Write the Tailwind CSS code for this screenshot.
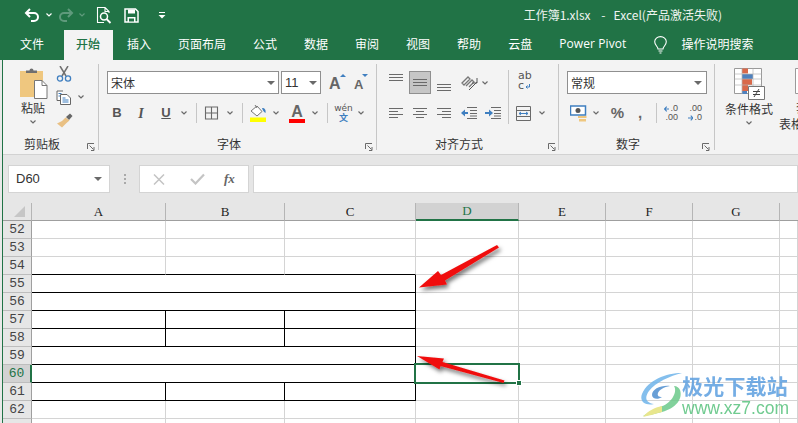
<!DOCTYPE html>
<html lang="zh-CN">
<head>
<meta charset="UTF-8">
<title>工作簿1.xlsx - Excel</title>
<script src="https://cdn.jsdelivr.net/npm/@tailwindcss/browser@4"></script>
</head>
<body class="bg-white">
<svg class="hidden">
  <symbol id="chev" viewBox="0 0 12 8"><path d="M3.5 2.5 6 5l2.500-2.500" fill="none" stroke="#6a6a6a" stroke-width="1.200"/></symbol>
  <symbol id="launch" viewBox="0 0 8 8"><path d="M.5 6V.5H7M2.500 2.500 6.500 6.500M7 4v3.500H4" fill="none" stroke="#6a6a6a" stroke-width="1"/></symbol>
  <symbol id="drop" viewBox="0 0 8 4"><path d="M0 0h8L4 4z" fill="#6a6a6a"/></symbol>
</svg>

<div class="relative w-[798px] h-[423px] overflow-hidden font-['Noto_Sans_CJK_SC','Noto_Sans',sans-serif] text-[12px] text-[#444]">
  <!-- Title bar -->
  <div class="h-[30px] bg-[#217346] flex items-center text-white">
    <svg class="ml-[24px] w-[16px] h-[14px]" viewBox="0 0 16 14"><path d="M6 1 2 5l4 4M2 5h8a4 4 0 0 1 0 8H7" fill="none" stroke="#fff" stroke-width="2"/></svg>
    <svg class="ml-[3px] w-[12px] h-[8px]" viewBox="0 0 12 8"><path d="M3.500 2.500 6 5l2.500-2.500" fill="none" stroke="#fff" stroke-width="1.200"/></svg>
    <svg class="ml-[3px] w-[16px] h-[14px]" viewBox="0 0 16 14"><path d="M10 1l4 4-4 4M14 5H6a4 4 0 0 0 0 8h3" fill="none" stroke="#5f9a7c" stroke-width="2"/></svg>
    <svg class="ml-[2px] w-[12px] h-[8px]" viewBox="0 0 12 8"><path d="M3.500 2.500 6 5l2.500-2.500" fill="none" stroke="#5f9a7c" stroke-width="1.200"/></svg>
    <svg class="ml-[8px] w-[16px] h-[17px]" viewBox="0 0 16 17"><path d="M9 .5H1.500v15H8M9 .5l4 4V6M9 .5v4h4" fill="none" stroke="#fff" stroke-width="1.100"/><circle cx="8" cy="9.500" r="3.500" fill="none" stroke="#fff" stroke-width="1.500"/><path d="M10.500 12l4 4" stroke="#fff" stroke-width="1.800"/></svg>
    <svg class="ml-[12px] w-[15px] h-[15px]" viewBox="0 0 15 15"><path d="M1 1h10.500L14 3.500V14H1z" fill="none" stroke="#fff" stroke-width="1.500"/><path d="M4 1.500h7v4H4zM3.500 9h8v5h-8z" fill="#fff"/><path d="M5 10.500h5v3H5z" fill="#217346"/></svg>
    <svg class="ml-[19px] w-[8px] h-[7px]" viewBox="0 0 8 7"><path d="M1 .5h6" stroke="#fff"/><path d="M.5 3h7L4 6.500z" fill="#fff"/></svg>
    <span class="ml-auto mr-[76px] whitespace-pre text-[#eef4f0]">工作簿1.xlsx    -   Excel(产品激活失败)</span>
  </div>

  <!-- Tabs -->
  <div class="h-[30px] bg-[#217346] flex pl-[7px] text-white leading-[28px]">
    <div class="px-[13px]">文件</div>
    <div class="ml-[7px] px-[12px] w-[49px] h-[30px] bg-[#f3f3f3] text-[#217346] font-medium">开始</div>
    <div class="ml-[1px] px-[13px]">插入</div>
    <div class="ml-[1px] px-[13px]">页面布局</div>
    <div class="ml-[1px] px-[13px]">公式</div>
    <div class="ml-[1px] px-[13px]">数据</div>
    <div class="ml-[1px] px-[13px]">审阅</div>
    <div class="ml-[1px] px-[13px]">视图</div>
    <div class="ml-[1px] px-[13px]">帮助</div>
    <div class="ml-[1px] px-[13px]">云盘</div>
    <div class="ml-[1px] px-[13px] whitespace-nowrap font-['Open_Sans',sans-serif] tracking-[.1px]">Power Pivot</div>
    <svg class="ml-[15px] mt-[6px] w-[13px] h-[18px]" viewBox="0 0 13 18"><path d="M4 13c0-2.500-3.300-3.800-3.300-7.200a5.800 5.200 0 0 1 11.600 0C12.300 9.200 9 10.500 9 13zM4.500 15h4M5.500 17h2" fill="none" stroke="#fff" stroke-width="1.100"/></svg>
    <div class="ml-[14px]">操作说明搜索</div>
  </div>

  <div class="flex h-[363px]">
    <!-- window edge -->
    <div class="w-[3px] bg-[#e9e9e9] border-r border-[#217346]"></div>

    <div class="w-[795px]">
      <!-- Ribbon -->
      <div class="h-[95px] bg-[#f3f3f3] border-b border-[#d2d2d2] flex items-start overflow-hidden">
        <!-- Clipboard -->
        <div class="relative w-[95px] h-[94px] shrink-0 flex">
          <div class="ml-[14px] w-[32px] flex flex-col items-center pt-[8px]">
            <svg class="w-[29px] h-[31px]" viewBox="0 0 29 31"><path d="M1 3h23v26H1z" fill="#efc77f"/><path d="M7 5V2.500h3.500a2 2 0 0 1 4 0H18V5z" fill="#6f6f6f"/><path d="M15.500 12.500h7.500l5 5v13H15.500z" fill="#fff" stroke="#777"/><path d="M23 12.500v5h5" fill="none" stroke="#777"/></svg>
            <div class="leading-[18px] text-[#333]">粘贴</div>
            <svg class="mt-[1px] w-[12px] h-[8px]"><use href="#chev"/></svg>
          </div>
          <div class="ml-[7px] w-[17px] pt-[6px] shrink-0">
            <svg class="w-[16px] h-[16px]" viewBox="0 0 16 16"><path d="M4 0l6 10M12 0 6 10" stroke="#707070" stroke-width="1.500"/><circle cx="4" cy="12.500" r="2.600" fill="none" stroke="#3f7fc0" stroke-width="1.300"/><circle cx="12" cy="12.500" r="2.600" fill="none" stroke="#3f7fc0" stroke-width="1.300"/></svg>
            <svg class="mt-[8px] w-[16px] h-[15px]" viewBox="0 0 16 15"><path d="M7 1H1v9.500h3M4.500 4.500H11l3.500 3.500v6.500h-10z" fill="#fff" stroke="#666"/><path d="M2.500 3.500h3M2.500 6h1.500M6.500 8h3M6.500 10h6M6.500 12h6" stroke="#3f7fc0"/></svg>
            <svg class="mt-[8px] w-[17px] h-[15px]" viewBox="0 0 17 15"><path d="M10 4l4-3.500 2.500 2.500L13 7z" fill="#666"/><path d="M9.500 4.500l4 3-3 2.500L6 14.500 1 10.500 6 8z" fill="#e9c083"/></svg>
          </div>
          <svg class="ml-[2px] mt-[33px] w-[12px] h-[8px]"><use href="#chev"/></svg>
          <div class="absolute left-0 right-0 bottom-0 h-[20px] leading-[20px] pl-[21px] text-[#333]">剪贴板</div>
          <svg class="absolute left-[84px] top-[83px] w-[8px] h-[8px]"><use href="#launch"/></svg>
        </div>
        <div class="mt-[4px] w-px h-[86px] shrink-0 bg-[#c6c6c6]"></div>

        <!-- Font -->
        <div class="relative w-[277px] h-[94px] shrink-0 pt-[11px] pl-[8px]">
          <div class="flex items-center h-[23px]">
            <div class="w-[172px] h-[23px] bg-white border border-[#8f8f8f] flex items-center pl-[3px] pr-[3px] justify-between text-[#333]">宋体<svg class="w-[8px] h-[4px]"><use href="#drop"/></svg></div>
            <div class="ml-[2px] w-[40px] h-[23px] bg-white border border-[#8f8f8f] flex items-center pl-[3px] pr-[3px] justify-between font-['Liberation_Sans',sans-serif] text-[#333] text-[13px]">11<svg class="w-[8px] h-[4px]"><use href="#drop"/></svg></div>
            <div class="ml-[8px] w-[17px] relative h-[18px] font-['Liberation_Sans',sans-serif] font-bold text-[#666] text-[16px] leading-[20px]">A<svg class="absolute right-0 top-0 w-[6px] h-[3px]" viewBox="0 0 8 4"><path d="M4 0l4 4H0z" fill="#3f7fc0"/></svg></div>
            <div class="ml-[8px] w-[14px] relative h-[18px] font-['Liberation_Sans',sans-serif] font-bold text-[#666] text-[13px] leading-[21px]">A<svg class="absolute right-0 top-0 w-[6px] h-[3px]" viewBox="0 0 8 4"><path d="M0 0h8L4 4z" fill="#3f7fc0"/></svg></div>
          </div>
          <div class="mt-[9px] flex items-center h-[20px] font-['Liberation_Sans',sans-serif]">
            <div class="w-[20px] text-center font-bold text-[13px] text-[#555]">B</div>
            <div class="ml-[4px] w-[20px] text-center italic font-['Liberation_Serif',serif] font-bold text-[14px] text-[#555]">I</div>
            <div class="ml-[5px] w-[20px] text-center font-bold underline text-[13px] text-[#555]">U</div>
            <svg class="ml-[2px] w-[12px] h-[8px]"><use href="#chev"/></svg>
            <div class="ml-[6px] w-px h-[20px] bg-[#c6c6c6]"></div>
            <svg class="ml-[7px] w-[15px] h-[14px]" viewBox="0 0 15 14"><path d="M1.500 1h12v12h-12zM7.500 1v12M1.500 7h12" fill="none" stroke="#6a6a6a" stroke-width="1.100"/></svg>
            <svg class="ml-[5px] w-[12px] h-[8px]"><use href="#chev"/></svg>
            <div class="ml-[6px] w-px h-[20px] bg-[#c6c6c6]"></div>
            <svg class="ml-[6px] w-[18px] h-[18px]" viewBox="0 0 18 18"><path d="M2 7l6-5 5 5.500-5 4.500z" fill="#fff" stroke="#777"/><path d="M6 1l2 3" stroke="#777"/><path d="M13 4c3 0 4 2 3.500 5-1.500-1-2.500-2-3.500-5z" fill="#3f7fc0"/><path d="M1 13.500h16V18H1z" fill="#ffff00"/></svg>
            <svg class="ml-[3px] w-[12px] h-[8px]"><use href="#chev"/></svg>
            <div class="ml-[6px] w-[18px] h-[19px] flex flex-col items-center"><span class="font-bold text-[#666] text-[16px] leading-[15px]">A</span><span class="w-[16px] h-[4px] bg-[#ff0000]"></span></div>
            <svg class="ml-[3px] w-[12px] h-[8px]"><use href="#chev"/></svg>
            <div class="ml-[6px] w-px h-[20px] bg-[#c6c6c6]"></div>
            <div class="ml-[7px] w-[17px] flex flex-col items-center leading-none"><span class="text-[9px] text-[#555] font-['DejaVu_Sans',sans-serif]">wén</span><span class="text-[9px] text-[#3f7fc0] font-bold font-['Noto_Sans_CJK_SC',sans-serif]">文</span></div>
            <svg class="ml-[3px] w-[12px] h-[8px]"><use href="#chev"/></svg>
          </div>
          <div class="absolute left-0 right-0 bottom-0 h-[20px] leading-[20px] pl-[118px] text-[#333]">字体</div>
          <svg class="absolute left-[266px] top-[83px] w-[8px] h-[8px]"><use href="#launch"/></svg>
        </div>
        <div class="mt-[4px] w-px h-[86px] shrink-0 bg-[#c6c6c6]"></div>

        <!-- Alignment -->
        <div class="relative w-[181px] h-[94px] shrink-0 pt-[11px] pl-[12px] flex">
          <div class="w-[119px] shrink-0">
            <div class="flex items-center h-[23px]">
              <svg class="w-[14px] h-[23px]" viewBox="0 0 14 23"><path d="M0 3.500h14M0 6.500h14M0 9.500h14" stroke="#6a6a6a"/></svg>
              <div class="ml-[6px] w-[22px] h-[23px] bg-[#c6c6c6] border border-[#8f8f8f] flex items-center justify-center"><svg class="w-[14px] h-[9px]" viewBox="0 0 14 9"><path d="M0 1.500h14M0 4.500h14M0 7.500h14" stroke="#6a6a6a"/></svg></div>
              <svg class="ml-[6px] w-[14px] h-[23px]" viewBox="0 0 14 23"><path d="M0 13.500h14M0 16.500h14M0 19.500h14" stroke="#6a6a6a"/></svg>
              <svg class="ml-[10px] w-[17px] h-[16px]" viewBox="0 0 17 16"><path d="M1 8l6-6 2 2-6 6zM5 11l6-6 2 2-5 5" fill="none" stroke="#777" stroke-width="1.300"/><path d="M8 15l8-8M16 3v5h-5" fill="none" stroke="#555"/></svg>
              <svg class="ml-[1px] w-[12px] h-[8px]"><use href="#chev"/></svg>
            </div>
            <div class="mt-[9px] flex items-center h-[20px]">
              <svg class="w-[14px] h-[12px]" viewBox="0 0 14 12"><path d="M0 1.500h14M0 4.500h9M0 7.500h14M0 10.500h9" stroke="#6a6a6a"/></svg>
              <svg class="ml-[10px] w-[14px] h-[12px]" viewBox="0 0 14 12"><path d="M0 1.500h14M3 4.500h8M0 7.500h14M3 10.500h8" stroke="#6a6a6a"/></svg>
              <svg class="ml-[10px] w-[14px] h-[12px]" viewBox="0 0 14 12"><path d="M0 1.500h14M5 4.500h9M0 7.500h14M5 10.500h9" stroke="#6a6a6a"/></svg>
              <svg class="ml-[10px] w-[16px] h-[12px]" viewBox="0 0 16 12"><path d="M0 6l4-3.500v7z" fill="#3f7fc0"/><path d="M3 6h4" stroke="#3f7fc0" stroke-width="2"/><path d="M6 .5h10M9 3.500h7M9 6.500h7M9 9h7M6 11.500h10" stroke="#6a6a6a"/></svg>
              <svg class="ml-[8px] w-[16px] h-[12px]" viewBox="0 0 16 12"><path d="M8 6 4 2.500v7z" fill="#3f7fc0"/><path d="M0 6h5" stroke="#3f7fc0" stroke-width="2"/><path d="M6 .5h10M9 3.500h7M9 6.500h7M9 9h7M6 11.500h10" stroke="#6a6a6a"/></svg>
            </div>
          </div>
          <div class="-mt-[1px] w-px h-[54px] shrink-0 bg-[#c6c6c6]"></div>
          <div class="pl-[7px]">
            <div class="ml-[2px] h-[23px] w-[14px] flex flex-col font-['DejaVu_Sans',sans-serif] text-[11px] text-[#555]"><span class="leading-[10px]">ab</span><span class="flex items-center leading-[10px]">c<svg class="ml-[1px] w-[5px] h-[5px]" viewBox="0 0 5 5"><path d="M4.500 0v3H1M2.500 1.500 1 3l1.500 1.500" fill="none" stroke="#3f7fc0"/></svg></span></div>
            <div class="mt-[9px] flex items-center h-[20px]">
              <svg class="w-[15px] h-[15px]" viewBox="0 0 15 15"><path d="M.5.500h14v14H.5zM.5 4.500h14M.5 10.500h14" fill="none" stroke="#6a6a6a"/><path d="M3 7.500h9M3 7.500l2-1.500M3 7.500 5 9M12 7.500 10 6M12 7.500 10 9" fill="none" stroke="#3f7fc0"/></svg>
              <svg class="ml-[5px] w-[12px] h-[8px]"><use href="#chev"/></svg>
            </div>
          </div>
          <div class="absolute left-0 right-0 bottom-0 h-[20px] leading-[20px] pl-[58px] text-[#333]">对齐方式</div>
          <svg class="absolute left-[171px] top-[83px] w-[8px] h-[8px]"><use href="#launch"/></svg>
        </div>
        <div class="mt-[4px] w-px h-[86px] shrink-0 bg-[#c6c6c6]"></div>

        <!-- Number -->
        <div class="relative w-[155px] h-[94px] shrink-0 pt-[11px] pl-[8px]">
          <div class="w-[140px] h-[23px] bg-white border border-[#8f8f8f] flex items-center px-[3px] justify-between text-[#333]">常规<svg class="mr-[1px] w-[8px] h-[4px]"><use href="#drop"/></svg></div>
          <div class="mt-[9px] flex items-center h-[20px] font-['Liberation_Sans',sans-serif]">
            <svg class="ml-[3px] w-[17px] h-[17px]" viewBox="0 0 17 17"><path d="M.5 1h15v9H.5z" fill="#fff" stroke="#3f7fc0" stroke-width="1.500"/><circle cx="8" cy="5.500" r="2.500" fill="#555"/><path d="M8 11h8.500v2H8zM9 14h7v2.500H9z" fill="#efc77f"/></svg>
            <svg class="ml-[3px] w-[12px] h-[8px]"><use href="#chev"/></svg>
            <div class="ml-[7px] w-[17px] text-center font-bold text-[15px] text-[#666]">%</div>
            <div class="ml-[6px] w-[16px] text-center font-bold text-[15px] leading-[14px] text-[#666]">,</div>
            <div class="ml-[8px] w-px h-[20px] bg-[#c6c6c6]"></div>
            <div class="ml-[7px] w-[14px] text-[9px] leading-[9px] text-right text-[#555]"><div class="flex items-center justify-end"><svg class="w-[6px] h-[6px] mr-[1px]" viewBox="0 0 6 6"><path d="M6 3H1M3 .5.500 3 3 5.500" fill="none" stroke="#3f7fc0" stroke-width="1.200"/></svg>.0</div>.00</div>
            <div class="ml-[10px] w-[14px] text-[9px] leading-[9px] text-right text-[#555]">.00<div class="flex items-center justify-end"><svg class="w-[6px] h-[6px] mr-[1px]" viewBox="0 0 6 6"><path d="M0 3h5M3 .5 5.500 3 3 5.500" fill="none" stroke="#3f7fc0" stroke-width="1.200"/></svg>.0</div></div>
          </div>
          <div class="absolute left-0 right-0 bottom-0 h-[20px] leading-[20px] pl-[57px] text-[#333]">数字</div>
          <svg class="absolute left-[143px] top-[83px] w-[8px] h-[8px]"><use href="#launch"/></svg>
        </div>
        <div class="mt-[4px] w-px h-[86px] shrink-0 bg-[#c6c6c6]"></div>

        <!-- Styles, runs off the window -->
        <div class="flex h-[94px] shrink-0">
          <div class="ml-[5px] w-[58px] flex flex-col items-center pt-[8px]">
            <svg class="w-[31px] h-[32px]" viewBox="0 0 31 32"><path d="M.5.500h27v25H.5z" fill="#fff" stroke="#9a9a9a"/><path d="M8 .5h6v5H8zM8 11h10v6H8z" fill="#d9694a"/><path d="M8 6h11v5H8zM8 23h5v3H8z" fill="#4f81bd"/><path d="M8 17h6v6H8z" fill="#d9694a"/><path d="M8 .5V26M19 .5V26M.5 6h27M.5 11h27M.5 17h27" fill="none" stroke="#b5b5b5" stroke-width=".7"/><path d="M14.500 18.500h16v13h-16z" fill="#fff" stroke="#777"/><path d="M19 23.500h7M19 26.500h7M25 21l-5 8" stroke="#444"/></svg>
            <div class="leading-[18px] text-[#333] whitespace-nowrap">条件格式</div>
            <svg class="mt-[1px] w-[12px] h-[8px]"><use href="#chev"/></svg>
          </div>
          <div class="w-[50px] flex flex-col items-center pt-[8px]">
            <svg class="ml-[15px] w-[31px] h-[32px]" viewBox="0 0 31 32"><path d="M.5.500h27v25H.5z" fill="#fff" stroke="#9a9a9a"/></svg>
            <div class="ml-[10px] leading-[16px] text-[#333] whitespace-nowrap">套用</div>
            <div class="leading-[16px] text-[#333] whitespace-nowrap">表格格式</div>
          </div>
        </div>
      </div>

      <!-- Formula bar -->
      <div class="h-[48px] bg-[#e6e6e6] flex pt-[10px]">
        <div class="ml-[5px] w-[102px] h-[28px] bg-white border border-[#d4d4d4] flex items-center justify-between pl-[7px] pr-[7px] font-['Liberation_Sans',sans-serif] text-[13px] text-[#333]">D60<svg class="w-[8px] h-[4px]"><use href="#drop"/></svg></div>
        <div class="ml-[14px] w-[2px] h-[10px] mt-[9px] border-l-2 border-dotted border-[#a9a9a9]"></div>
        <div class="ml-[13px] w-[110px] h-[28px] bg-white border border-[#d4d4d4] flex items-center">
          <svg class="ml-[13px] w-[12px] h-[11px]" viewBox="0 0 12 11"><path d="M1 .5 11 10.500M11 .5 1 10.500" stroke="#c4c4c4" stroke-width="1.500"/></svg>
          <svg class="ml-[25px] w-[15px] h-[12px]" viewBox="0 0 15 12"><path d="M1 6l4.500 4.500L14 1.500" fill="none" stroke="#c4c4c4" stroke-width="2.200"/></svg>
          <span class="ml-[19px] italic font-bold font-['Liberation_Serif',serif] text-[13px] text-[#666]">fx</span>
        </div>
        <div class="ml-[4px] flex-1 h-[28px] bg-white border border-[#d4d4d4]"></div>
      </div>

      <!-- Sheet -->
      <div class="grid grid-cols-[29px_134px_119px_131px_103px_87px_87px_87px_18px] auto-rows-[18px] font-['Liberation_Mono',monospace] [&>div]:border-r [&>div]:border-b [&>div]:border-[#d4d4d4]">
        <div class="bg-[#e6e6e6] border-b-[#9f9f9f]! border-r-[#b5b5b5]! flex items-center justify-center"><svg class="ml-[5px] w-[11px] h-[11px]" viewBox="0 0 11 11"><path d="M11 0v11H0z" fill="#c6c6c6"/></svg></div>
        <div class="bg-[#e6e6e6] border-b-[#9f9f9f]! border-r-[#b5b5b5]! text-center leading-[17px] text-[#222] font-['Liberation_Serif',serif] text-[13px]">A</div>
        <div class="bg-[#e6e6e6] border-b-[#9f9f9f]! border-r-[#b5b5b5]! text-center leading-[17px] text-[#222] font-['Liberation_Serif',serif] text-[13px]">B</div>
        <div class="bg-[#e6e6e6] border-b-[#9f9f9f]! border-r-[#b5b5b5]! text-center leading-[17px] text-[#222] font-['Liberation_Serif',serif] text-[13px]">C</div>
        <div class="bg-[#d2d2d2] border-b-2! border-b-[#217346]! border-r-[#b5b5b5]! text-center leading-[16px] text-[#217346] font-['Liberation_Serif',serif] text-[13px]">D</div>
        <div class="bg-[#e6e6e6] border-b-[#9f9f9f]! border-r-[#b5b5b5]! text-center leading-[17px] text-[#222] font-['Liberation_Serif',serif] text-[13px]">E</div>
        <div class="bg-[#e6e6e6] border-b-[#9f9f9f]! border-r-[#b5b5b5]! text-center leading-[17px] text-[#222] font-['Liberation_Serif',serif] text-[13px]">F</div>
        <div class="bg-[#e6e6e6] border-b-[#9f9f9f]! border-r-[#b5b5b5]! text-center leading-[17px] text-[#222] font-['Liberation_Serif',serif] text-[13px]">G</div>
        <div class="bg-[#e6e6e6] border-b-[#9f9f9f]! border-r-0!"></div>

        <div class="bg-[#e6e6e6] border-r-[#9f9f9f]! border-b-[#bdbdbd]! text-center text-[13px] leading-[18px] text-[#444]">52</div>
        <div></div><div></div><div></div><div></div><div></div><div></div><div></div><div></div>
        <div class="bg-[#e6e6e6] border-r-[#9f9f9f]! border-b-[#bdbdbd]! text-center text-[13px] leading-[18px] text-[#444]">53</div>
        <div></div><div></div><div></div><div></div><div></div><div></div><div></div><div></div>
        <div class="bg-[#e6e6e6] border-r-[#9f9f9f]! border-b-[#bdbdbd]! text-center text-[13px] leading-[18px] text-[#444]">54</div>
        <div class="border-b-black!"></div><div class="border-b-black!"></div><div class="border-b-black!"></div><div></div><div></div><div></div><div></div><div></div>
        <div class="bg-[#e6e6e6] border-r-[#9f9f9f]! border-b-[#bdbdbd]! text-center text-[13px] leading-[18px] text-[#444]">55</div>
        <div class="col-span-3 border-black!"></div><div></div><div></div><div></div><div></div><div></div>
        <div class="bg-[#e6e6e6] border-r-[#9f9f9f]! border-b-[#bdbdbd]! text-center text-[13px] leading-[18px] text-[#444]">56</div>
        <div class="col-span-3 border-black!"></div><div></div><div></div><div></div><div></div><div></div>
        <div class="bg-[#e6e6e6] border-r-[#9f9f9f]! border-b-[#bdbdbd]! text-center text-[13px] leading-[18px] text-[#444]">57</div>
        <div class="border-black!"></div><div class="border-black!"></div><div class="border-black!"></div><div></div><div></div><div></div><div></div><div></div>
        <div class="bg-[#e6e6e6] border-r-[#9f9f9f]! border-b-[#bdbdbd]! text-center text-[13px] leading-[18px] text-[#444]">58</div>
        <div class="border-black!"></div><div class="border-black!"></div><div class="border-black!"></div><div></div><div></div><div></div><div></div><div></div>
        <div class="bg-[#e6e6e6] border-r-[#9f9f9f]! border-b-[#bdbdbd]! text-center text-[13px] leading-[18px] text-[#444]">59</div>
        <div class="col-span-3 border-black!"></div><div></div><div></div><div></div><div></div><div></div>
        <div class="bg-[#d2d2d2] border-r-2! border-r-[#217346]! border-b-[#bdbdbd]! text-center text-[13px] leading-[18px] text-[#217346]">60</div>
        <div class="col-span-3 border-black!"></div><div></div><div></div><div></div><div></div><div></div>
        <div class="bg-[#e6e6e6] border-r-[#9f9f9f]! border-b-[#bdbdbd]! text-center text-[13px] leading-[18px] text-[#444]">61</div>
        <div class="border-black!"></div><div class="border-black!"></div><div class="border-black!"></div><div></div><div></div><div></div><div></div><div></div>
        <div class="bg-[#e6e6e6] border-r-[#9f9f9f]! border-b-[#bdbdbd]! text-center text-[13px] leading-[18px] text-[#444]">62</div>
        <div></div><div></div><div></div><div></div><div></div><div></div><div></div><div></div>
        <div class="bg-[#e6e6e6] border-r-[#9f9f9f]! border-b-[#bdbdbd]!"></div>
        <div></div><div></div><div></div><div></div><div></div><div></div><div></div><div></div>
      </div>
    </div>
  </div>

  <!-- Selected cell -->
  <div class="absolute left-[414px] top-[363px] w-[106px] h-[21px] border-2 border-[#217346]"></div>
  <div class="absolute left-[516px] top-[380px] w-[6px] h-[6px] bg-[#217346] border border-white"></div>

  <!-- Annotation arrows -->
  <svg class="absolute left-0 top-0 w-[798px] h-[423px]" viewBox="0 0 798 423">
    <defs><filter id="sh" x="-20%" y="-20%" width="140%" height="150%"><feDropShadow dx="2" dy="3" stdDeviation="2" flood-color="#000" flood-opacity=".55"/></filter></defs>
    <path d="M419 287.500 438 271l3 4 56-30 2 2.500-54 33 2 4z" fill="#f00f0f" filter="url(#sh)"/>
    <path d="M417 356l27 2.500-1.500 3.500 62 18.500-1 2.500-63-17-1 3.500z" fill="#f00f0f" filter="url(#sh)"/>
  </svg>

  <!-- Watermark -->
  <div class="absolute left-[640px] top-[372px] w-[152px] h-[48px] flex opacity-85">
    <svg class="w-[44px] h-[46px] shrink-0" viewBox="0 0 44 46">
      <path d="M42 1C26 1 8 8 2 22c-3 8 4 12 12 10C6 31 4 26 9 19 16 10 30 4 42 1z" fill="#6fb4ea"/>
      <path d="M30 14c-9-1-18 3-18 9 0 4 6 5 10 2-3 0-5-1-4-4 1-3 6-6 12-7z" fill="#4f8fd0"/>
      <path d="M34 14c4 6-3 18-14 21-6 2-10 5-17 9 6-1 12-2 19-4 14-4 21-13 18-22-1-2-3-4-6-4z" fill="#6cc98a"/>
      <path d="M22 40C14 42 8 44 3 45c6-7 11-9 19-11z" fill="#e4e27a"/>
    </svg>
    <div class="ml-[-2px] flex flex-col">
      <div class="text-[21px] leading-[24px] font-bold text-[#5c9fe0] whitespace-nowrap tracking-[.2px] mt-[1px]">极光下载站</div>
      <div class="mt-[2px] text-[17.500px] leading-[18px] text-[#58c27d] whitespace-nowrap font-['Liberation_Sans',sans-serif]">www.xz7.com</div>
    </div>
  </div>
</div>
</body>
</html>
